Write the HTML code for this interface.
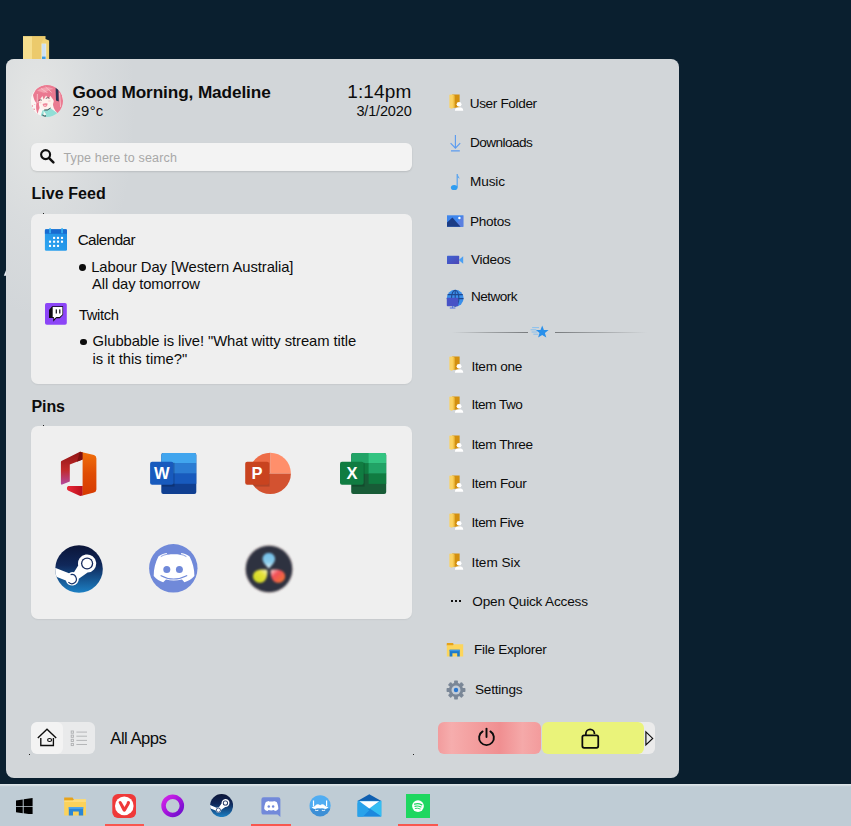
<!DOCTYPE html>
<html lang="en">
<head>
<meta charset="utf-8">
<title>Start Menu</title>
<style>
*{box-sizing:border-box;margin:0;padding:0}
html,body{width:851px;height:826px;overflow:hidden;background:#0a1f2f;font-family:"Liberation Sans",sans-serif;color:#0c0c0c}
.abs{position:absolute}
#desk{position:absolute;left:0;top:0;width:851px;height:826px;background:#0a1f2f;overflow:hidden}
#panel{position:absolute;left:6px;top:59px;width:673px;height:719px;background:#d2d6d9;border-radius:8px;overflow:hidden}
#glow{position:absolute;left:-40px;top:-40px;width:170px;height:300px;background:radial-gradient(ellipse at 42% 30%,rgba(233,234,232,.8) 0,rgba(226,228,228,.4) 40%,rgba(210,214,217,0) 70%)}
.t{position:absolute;white-space:nowrap;line-height:1}
#taskbar{position:absolute;left:0;top:784px;width:851px;height:42px;background:linear-gradient(#e2e8eb 0,#d6dfe4 1.2px,#bfccd5 2.8px)}
.card{position:absolute;background:#efefef;border-radius:7px;box-shadow:0 1px 1.5px rgba(0,0,0,.06)}
.ul{position:absolute;top:824px;height:2px;background:#f8574f}
.dot{position:absolute;width:6.8px;height:6.8px;border-radius:50%;background:#0c0c0c}
</style>
</head>
<body>
<div id="desk">

<!-- desktop folder icon -->
<svg class="abs" style="left:22px;top:35px" width="28" height="26" viewBox="0 0 28 26">
  <path d="M1 1.3 L23.5 1.3 L23.5 4 L27.1 5.4 L27.1 26 L1 26 Z" fill="#f0d274"/>
  <path d="M1 1.3 L10 1.3 L10 26 L1 26 Z" fill="#f6de8e"/>
  <path d="M10 1.3 L23.5 1.3 L19 8 L19 26 L10 26 Z" fill="#ecca6c"/>
  <rect x="19.6" y="8.6" width="4.6" height="17.4" fill="#e6eef6"/>
  <rect x="20" y="21.5" width="3.6" height="3.2" fill="#3d9be2"/>
  <path d="M20 10h3.6M20 12h3.6M20 14h3.6M20 16h3.6M20 18h3.6M20 20h3.6" stroke="#a9cdee" stroke-width=".8"/>
</svg>

<svg class="abs" style="left:3px;top:269px" width="4" height="8" viewBox="0 0 4 8"><path d="M3 1.2 L3 6.8 L.8 6.8 Z" fill="#e8eef6"/></svg>
<div id="panel"><div id="glow"></div></div>

<!-- SEARCH + CARDS -->
<div class="abs" id="search" style="left:31px;top:143px;width:381px;height:28px;background:#f3f3f3;border-radius:6px;box-shadow:0 1px 2px rgba(0,0,0,.12)"></div>
<div class="card" style="left:31px;top:214px;width:381px;height:170px"></div>
<div class="card" style="left:31px;top:426px;width:381px;height:193px"></div>
<div class="abs" style="left:31px;top:722px;width:64px;height:32px;border-radius:6px;background:#e9eaeb;overflow:hidden"><div style="width:32px;height:32px;background:#f3f3f3;border-radius:6px"></div></div>
<!-- power row -->
<div class="abs" style="left:438px;top:722px;width:103px;height:32px;border-radius:6px;background:linear-gradient(90deg,#f29c9d 0,#f6adad 13%,#f4a2a2 30%,#f08f91 60%,#f5a9a9 82%,#f39b9c 100%)"></div>
<div class="abs" style="left:636px;top:722px;width:19px;height:32px;border-radius:0 6px 6px 0;background:#ebebeb"></div>
<div class="abs" style="left:542px;top:722px;width:102px;height:32px;border-radius:6px;background:#eaf37a"></div>


<div class="t" id="greet" style="left:72.4px;top:84.00px;font-size:17.2px;letter-spacing:-0.104px;font-weight:bold">Good Morning, Madeline</div>
<div class="t" id="temp" style="left:72.6px;top:104.00px;font-size:14.8px;letter-spacing:0.292px;">29°c</div>
<div class="t" id="clock" style="left:347.2px;top:82.00px;font-size:19px;letter-spacing:0.134px;">1:14pm</div>
<div class="t" id="date" style="left:356.4px;top:104.00px;font-size:14.5px;letter-spacing:-0.162px;">3/1/2020</div>
<div class="t" id="ph" style="left:63.4px;top:152.00px;font-size:12.5px;letter-spacing:0.166px;color:#a8a8a8">Type here to search</div>
<div class="t" id="lf" style="left:31.4px;top:186.00px;font-size:16px;letter-spacing:0.069px;font-weight:bold">Live Feed</div>
<div class="t" id="cal" style="left:77.7px;top:232.00px;font-size:15.2px;letter-spacing:-0.538px;">Calendar</div>
<div class="t" id="lab" style="left:91.2px;top:260.00px;font-size:14.8px;letter-spacing:-0.077px;">Labour Day [Western Australia]</div>
<div class="t" id="allday" style="left:92.1px;top:277.00px;font-size:14.8px;letter-spacing:-0.159px;">All day tomorrow</div>
<div class="t" id="tw" style="left:78.9px;top:308.00px;font-size:14.8px;letter-spacing:-0.366px;">Twitch</div>
<div class="t" id="glub" style="left:92.6px;top:334.00px;font-size:14.8px;letter-spacing:-0.073px;">Glubbable is live! "What witty stream title</div>
<div class="t" id="isit" style="left:92.4px;top:352.00px;font-size:14.8px;letter-spacing:0.002px;">is it this time?"</div>
<div class="t" id="pins" style="left:31.4px;top:399.00px;font-size:16px;letter-spacing:-0.061px;font-weight:bold">Pins</div>
<div class="t" id="allapps" style="left:110.3px;top:731.00px;font-size:16.6px;letter-spacing:-0.479px;">All Apps</div>
<div class="t" id="r1" style="left:469.7px;top:97.00px;font-size:13.6px;letter-spacing:-0.356px;">User Folder</div>
<div class="t" id="r2" style="left:470.0px;top:136.00px;font-size:13.6px;letter-spacing:-0.546px;">Downloads</div>
<div class="t" id="r3" style="left:470.0px;top:175.00px;font-size:13.6px;letter-spacing:-0.113px;">Music</div>
<div class="t" id="r4" style="left:470.0px;top:215.00px;font-size:13.6px;letter-spacing:-0.314px;">Photos</div>
<div class="t" id="r5" style="left:471.1px;top:253.00px;font-size:13.6px;letter-spacing:-0.305px;">Videos</div>
<div class="t" id="r6" style="left:470.9px;top:290.00px;font-size:13.6px;letter-spacing:-0.514px;">Network</div>
<div class="t" id="i1" style="left:471.4px;top:360.00px;font-size:13.6px;letter-spacing:-0.291px;">Item one</div>
<div class="t" id="i2" style="left:471.4px;top:398.00px;font-size:13.6px;letter-spacing:-0.484px;">Item Two</div>
<div class="t" id="i3" style="left:471.4px;top:438.00px;font-size:13.6px;letter-spacing:-0.424px;">Item Three</div>
<div class="t" id="i4" style="left:471.4px;top:477.00px;font-size:13.6px;letter-spacing:-0.340px;">Item Four</div>
<div class="t" id="i5" style="left:471.4px;top:516.00px;font-size:13.6px;letter-spacing:-0.407px;">Item Five</div>
<div class="t" id="i6" style="left:471.4px;top:556.00px;font-size:13.6px;letter-spacing:-0.041px;">Item Six</div>
<div class="t" id="qa" style="left:472.3px;top:595.00px;font-size:13.6px;letter-spacing:-0.185px;">Open Quick Access</div>
<div class="t" id="fe" style="left:474.0px;top:643.00px;font-size:13.6px;letter-spacing:-0.286px;">File Explorer</div>
<div class="t" id="st" style="left:475.0px;top:683.00px;font-size:13.6px;letter-spacing:-0.222px;">Settings</div>

<!-- avatar -->
<div class="abs" style="left:31.2px;top:85.2px;width:32px;height:32px;border-radius:50%;overflow:hidden;background:#f7eeee">
<svg width="32" height="32" viewBox="0 0 32 32">
  <defs><filter id="avb" x="-10%" y="-10%" width="120%" height="120%"><feGaussianBlur stdDeviation=".45"/></filter></defs>
  <g filter="url(#avb)">
  <rect x="-2" y="-2" width="36" height="36" fill="#fbf5f4"/>
  <path d="M17 -1 L26 1 L24 5 L18 4Z" fill="#ead8cc"/>
  <!-- hair mass -->
  <path d="M4.5 5 C9 -1 20 -2 26 2.5 C32 7 33.5 17 31 26 L27.5 29 C25 27 22.5 24 22 20 L22.5 11 L9 10.5 C7.5 14 7.5 19 8.6 23 C7.4 25 7 27 6.8 29 C5.2 26 4.6 22 5.4 18 C3.4 16 2.4 12.6 2 10 Z" fill="#ea7a91"/>
  <path d="M6 6 C10 2 18 1.2 22.5 4 C19 4.4 15.6 6 13.6 8.6 C11.2 7 8.4 6.2 6 6Z" fill="#f3a0ae"/>
  <path d="M10 3.4 L17 8.4 M14.6 2 L20.6 7.4 M28.6 8 L29.6 22 M6.4 9 L6.2 18" stroke="#f7c0c8" stroke-width=".9" fill="none"/>
  <!-- face -->
  <path d="M8.4 12 C11 10 18 9.2 22.4 11.4 C23.4 15.6 22.2 20.6 19 23.4 C16 25.4 12 24.8 10 22 C8.2 19.4 7.8 15 8.4 12Z" fill="#fdf1ec"/>
  <!-- bangs -->
  <path d="M7.6 9 C12 7.4 18 7 23 9.4 L23.4 16.4 C21.8 14.2 20.4 12.4 19.4 10.8 L17.6 13.4 L15 10.6 L12.6 14.4 L11.4 11 C10.2 12.6 9 14.2 8.2 16.2 Z" fill="#ea7890"/>
  <!-- ribbon -->
  <path d="M24.6 2.6 L27.4 4.4 L27.8 16.4 L25 15.4 Z" fill="#2b3052"/>
  <!-- eyes -->
  <path d="M7.6 15.6 q1.6 -1.3 3.2 -.4 M14.8 13.4 q1.8 -1.3 3.8 -.2" stroke="#4b3a44" stroke-width=".8" fill="none"/>
  <ellipse cx="9.2" cy="17.6" rx="1.5" ry=".8" fill="#f8c9cc" opacity=".8"/><ellipse cx="18.4" cy="16" rx="1.6" ry=".8" fill="#f8c9cc" opacity=".8"/>
  <!-- mouth -->
  <path d="M11.6 19 Q14.2 17.6 16.6 18.6 Q16.4 22.2 13.8 22 Q11.6 21.6 11.6 19Z" fill="#ee8499"/>
  <ellipse cx="14" cy="20.6" rx="1.4" ry=".8" fill="#f9bcc4"/>
  <!-- clothes -->
  <path d="M11.4 25.6 L19.6 23.2 L27.6 29 L25 33 L9 33 Z" fill="#92ded6"/>
  <path d="M13.2 25 Q16.4 26 19.6 23" stroke="#2a2630" stroke-width=".8" fill="none"/>
  <path d="M11.4 30 Q13 31.6 15 31" stroke="#2a2630" stroke-width="1" fill="none"/>
  <path d="M12.6 26 L15.4 29.4 L12.6 30.4Z" fill="#fdf6f2"/>
  <!-- left bg flecks -->
  <circle cx="1.3" cy="21" r=".7" fill="#ea7890"/><circle cx="3.1" cy="24.2" r=".8" fill="#ea7890"/><circle cx="3.8" cy="19.4" r=".5" fill="#f3a6b2"/>
  </g>
</svg>
</div>

<!-- search icon -->
<svg class="abs" style="left:38.6px;top:148.4px" width="17" height="17" viewBox="0 0 17 17"><circle cx="6.6" cy="6.6" r="4.5" fill="none" stroke="#111" stroke-width="2.1"/><path d="M10.1 10.1 L14.4 14.4" stroke="#111" stroke-width="2.5" stroke-linecap="round"/></svg>

<!-- calendar icon -->
<svg class="abs" style="left:44px;top:228px" width="24" height="24" viewBox="0 0 24 24">
  <defs><linearGradient id="cg" x1="0" y1="1" x2="1" y2="0"><stop offset="0" stop-color="#2fa6f0"/><stop offset="1" stop-color="#1c8be4"/></linearGradient></defs>
  <rect x=".9" y="1.3" width="22.1" height="21.5" rx="1.3" fill="url(#cg)"/>
  <path d="M.9 2.6 a1.3 1.3 0 0 1 1.3 -1.3 h19.5 a1.3 1.3 0 0 1 1.3 1.3 v3.2 h-22.1z" fill="#186bd0"/>
  <rect x="5.3" y="0" width="1.5" height="5.2" rx=".5" fill="#3bbcf6"/><rect x="17.3" y="0" width="1.5" height="5.2" rx=".5" fill="#3bbcf6"/>
  <g fill="#fff">
   <rect x="9.05" y="8.85" width="2.1" height="2.1"/><rect x="12.95" y="8.85" width="2.1" height="2.1"/><rect x="16.95" y="8.85" width="2.1" height="2.1"/>
   <rect x="4.95" y="12.65" width="2.1" height="2.1"/><rect x="9.05" y="12.65" width="2.1" height="2.1"/><rect x="12.95" y="12.65" width="2.1" height="2.1"/><rect x="16.95" y="12.65" width="2.1" height="2.1"/>
   <rect x="4.95" y="16.85" width="2.1" height="2.1"/><rect x="9.05" y="16.85" width="2.1" height="2.1"/><rect x="12.95" y="16.85" width="2.1" height="2.1"/>
  </g>
</svg>
<!-- twitch icon -->
<svg class="abs" style="left:45.2px;top:302.8px" width="21.8" height="21.8" viewBox="0 0 21.8 21.8">
  <rect width="21.8" height="21.8" rx="1.8" fill="#8c45f7"/>
  <path d="M7.1 3.2 H18.1 V11.7 L14.8 15.2 H11.3 L8.3 18.7 V14.9 H4 V7 Z" fill="#0d0a12"/>
  <path d="M7.7 4 H17.4 V11.4 L14.6 14 H11.4 L8.9 15.9 V14 H7.7 Z" fill="#fff"/>
  <rect x="10.7" y="6.4" width="1.2" height="4.1" fill="#0d0a12"/><rect x="14.2" y="6.4" width="1.2" height="4.1" fill="#0d0a12"/>
</svg>
<div class="dot" style="left:79.3px;top:264.2px"></div>
<div class="dot" style="left:80.4px;top:338.5px"></div>

<!-- PINS: office -->
<svg class="abs" style="left:60px;top:451px" width="38" height="46" viewBox="0 0 38 46">
  <defs>
   <linearGradient id="of1" x1="0" y1="0" x2="0" y2="1"><stop offset="0" stop-color="#8f1414"/><stop offset=".55" stop-color="#c12a2a"/><stop offset="1" stop-color="#b44aa0"/></linearGradient>
   <linearGradient id="of2" x1="0" y1="0" x2="0" y2="1"><stop offset="0" stop-color="#f0700c"/><stop offset=".5" stop-color="#e04c04"/><stop offset="1" stop-color="#d63a02"/></linearGradient>
   <linearGradient id="of3" x1="0" y1="0" x2="1" y2="0"><stop offset="0" stop-color="#ec2838"/><stop offset="1" stop-color="#b80f1c"/></linearGradient>
  </defs>
  <path d="M20 .8 L1.4 10 Q.9 10.4 .9 11.2 V32.6 Q.9 34 2.2 33.6 L9.8 30.4 V13.6 L22.6 8.6 V1.2Z" fill="url(#of1)"/>
  <path d="M8.4 34.9 H22.8 V44.6 L20.2 45 L8 39.4 Q6.4 38.4 7 36.4 Q7.4 35 8.4 34.9Z" fill="url(#of3)"/>
  <path d="M20 .8 L34 4 Q36.4 4.8 36.4 7.4 V38.4 Q36.4 40.8 34 41.6 L22.6 44.6 V8.6 L20 .8Z" fill="url(#of2)"/>
  <path d="M20 .8 L22.6 1.6 V8.6 L17 10.8Z" fill="#7d1010"/>
</svg>
<!-- word -->
<svg class="abs" style="left:149px;top:452px" width="48" height="43" viewBox="0 0 48 43">
  <defs><clipPath id="wc"><rect x="12.3" y="1.1" width="35" height="40.8" rx="2"/></clipPath></defs>
  <g clip-path="url(#wc)"><rect x="12" y="1" width="36" height="41" fill="#103f91"/><rect x="12" y="1" width="36" height="10.6" fill="#41a5ee"/><rect x="12" y="11.3" width="36" height="10.5" fill="#2b7cd3"/><rect x="12" y="21.5" width="36" height="10.3" fill="#185abd"/></g>
  <rect x="13" y="10.6" width="12.6" height="24" fill="#000" opacity=".18"/>
  <rect x="1.1" y="9.8" width="23.3" height="23" rx="2" fill="#185abd"/>
  <text x="12.8" y="27.4" text-anchor="middle" font-family="Liberation Sans, sans-serif" font-weight="bold" font-size="16.5" fill="#fff">W</text>
</svg>
<!-- powerpoint -->
<svg class="abs" style="left:244px;top:452px" width="48" height="43" viewBox="0 0 48 43">
  <defs><clipPath id="pc"><circle cx="26.2" cy="21.4" r="20.7"/></clipPath></defs>
  <g clip-path="url(#pc)"><rect x="0" y="0" width="26.6" height="21.6" fill="#ed6c47"/><rect x="26.6" y="0" width="22" height="21.6" fill="#ff8f6b"/><rect x="0" y="21.6" width="48" height="22" fill="#d35230"/><rect x="6" y="10.6" width="19.6" height="24" fill="#000" opacity=".16"/></g>
  <rect x="1.2" y="9.8" width="23.8" height="23" rx="2" fill="#c9431f"/>
  <text x="13.1" y="27.3" text-anchor="middle" font-family="Liberation Sans, sans-serif" font-weight="bold" font-size="16.5" fill="#fff">P</text>
</svg>
<!-- excel -->
<svg class="abs" style="left:339px;top:452px" width="48" height="43" viewBox="0 0 48 43">
  <defs><clipPath id="xc"><rect x="12.2" y="1.1" width="35" height="40.8" rx="2"/></clipPath></defs>
  <g clip-path="url(#xc)">
   <rect x="12" y="1" width="36" height="41" fill="#185c37"/>
   <rect x="12" y="1" width="18" height="10.6" fill="#21a366"/><rect x="29.6" y="1" width="18.4" height="10.6" fill="#33c481"/>
   <rect x="12" y="11.3" width="18" height="10.5" fill="#107c41"/><rect x="29.6" y="11.3" width="18.4" height="10.5" fill="#21a366"/>
   <rect x="29.6" y="21.5" width="18.4" height="10.4" fill="#107c41"/>
  </g>
  <rect x="13" y="10.6" width="12.6" height="24" fill="#000" opacity=".18"/>
  <rect x="1" y="9.8" width="23.7" height="23" rx="2" fill="#107c41"/>
  <text x="12.9" y="27.3" text-anchor="middle" font-family="Liberation Sans, sans-serif" font-weight="bold" font-size="16.5" fill="#fff">X</text>
</svg>
<!-- steam -->
<svg class="abs" style="left:55px;top:544.5px" width="48" height="48" viewBox="0 0 48 48">
  <defs><linearGradient id="stg" x1="0" y1="0" x2="0" y2="1"><stop offset="0" stop-color="#0b1538"/><stop offset=".42" stop-color="#10285a"/><stop offset="1" stop-color="#1c80c4"/></linearGradient>
  <clipPath id="stc"><circle cx="24" cy="24" r="23.8"/></clipPath></defs>
  <circle cx="24" cy="24" r="23.8" fill="url(#stg)"/>
  <g clip-path="url(#stc)">
   <path d="M-1 22.4 L14 28.2 Q16.6 26.8 19 27.2 L23.2 20.4 A9.1 9.1 0 1 1 32.6 27.6 L23.8 33.8 A6.6 6.6 0 0 1 10.8 35.6 L-1 30.8 Z" fill="#fff"/>
   <circle cx="32.1" cy="18.5" r="6.1" fill="#13275a"/><circle cx="32.1" cy="18.5" r="4.8" fill="#fff"/>
   <path d="M15.6 29.6 A4.6 4.6 0 1 1 13.4 37.2" fill="none" stroke="#16346c" stroke-width="1.2"/>
  </g>
</svg>
<!-- discord -->
<svg class="abs" style="left:149.2px;top:543.8px" width="49" height="49" viewBox="0 0 49 49">
  <circle cx="24.3" cy="24.3" r="24.2" fill="#7089d9"/>
  <path d="M17.6 9 C14.6 9.5 11.8 10.6 9.4 12.4 C6.4 18 4.6 25 4.7 32 C7.4 35.4 10.8 37.4 14.2 38.2 L17 35.4 C21.8 36.8 27.4 36.8 33 35.4 L35.4 38.2 C38.8 37.4 42.6 35.4 45.4 32 C45.5 25 43.6 18 40.6 12.4 C38.2 10.6 35.4 9.5 32.4 9 L31.4 10.8 C27 10.2 23 10.2 18.6 10.8 Z" fill="#fff"/>
  <circle cx="17.8" cy="25.4" r="3.5" fill="#7089d9"/><circle cx="30.4" cy="25.4" r="3.5" fill="#7089d9"/>
  <path d="M11.6 31.4 Q24.3 38.6 38.2 31.4" fill="none" stroke="#7089d9" stroke-width="1.1"/>
  <path d="M11.8 12.6 Q14.6 10.8 18.6 10.2 M30.6 10.2 Q34.6 10.8 37.4 12.6" fill="none" stroke="#7089d9" stroke-width=".8"/>
</svg>
<!-- davinci resolve -->
<svg class="abs" style="left:242px;top:541.5px" width="54" height="54" viewBox="0 0 54 54">
  <defs>
   <filter id="bl" x="-20%" y="-20%" width="140%" height="140%"><feGaussianBlur stdDeviation=".85"/></filter>
   <filter id="bl2" x="-20%" y="-20%" width="140%" height="140%"><feGaussianBlur stdDeviation="1.1"/></filter>
   <linearGradient id="dv1" x1="0" y1="0" x2="0" y2="1"><stop offset="0" stop-color="#74bfe9"/><stop offset=".6" stop-color="#88cbea"/><stop offset="1" stop-color="#eaf6fb"/></linearGradient>
   <linearGradient id="dv2" x1="1" y1="0" x2="0" y2="1"><stop offset="0" stop-color="#f6f4c8"/><stop offset=".35" stop-color="#e6e238"/><stop offset="1" stop-color="#c9d61e"/></linearGradient>
   <linearGradient id="dv3" x1="0" y1="0" x2="1" y2="1"><stop offset="0" stop-color="#fbe0dc"/><stop offset=".35" stop-color="#f2505a"/><stop offset="1" stop-color="#f07a2c"/></linearGradient>
  </defs>
  <circle cx="27" cy="27" r="24.4" fill="#d9c9c6" opacity=".55" filter="url(#bl2)"/>
  <circle cx="27" cy="27" r="23.3" fill="#2f3340" filter="url(#bl)"/>
  <g filter="url(#bl)">
   <path d="M26.8 26.4 C22 22 20.4 19 20.6 16.6 C20.8 13 23.6 11 26.8 11 C30 11 32.8 13 33 16.6 C33.2 19 31.6 22 26.8 26.4Z" fill="url(#dv1)"/>
   <path d="M25.4 28 C25.8 33 24.6 37 22 39.4 C19 41.6 15 41 12.6 38.4 C10.2 35.6 10.4 31.6 13.4 29.4 C16.4 27.4 21 27.2 25.4 28Z" fill="url(#dv2)"/>
   <path d="M28.7 28 C28.3 33 29.5 37 32.1 39.4 C35.1 41.6 39.1 41 41.5 38.4 C43.9 35.6 43.7 31.6 40.7 29.4 C37.7 27.4 33.1 27.2 28.7 28Z" fill="url(#dv3)"/>
  </g>
</svg>

<!-- home icon -->
<svg class="abs" style="left:36px;top:727px" width="22" height="20" viewBox="0 0 22 20">
  <path d="M1.8 11 L11 2.2 L20.2 11 M4.8 11 V18.5 H17.4 V11" fill="none" stroke="#0c0c0c" stroke-width="1.35" stroke-linejoin="miter"/>
  <ellipse cx="13.6" cy="13" rx="2" ry="1.5" fill="none" stroke="#0c0c0c" stroke-width="1.1"/>
</svg>
<!-- list icon -->
<svg class="abs" style="left:69px;top:729px" width="20" height="18" viewBox="0 0 20 18">
  <g fill="none" stroke="#aeb0b2" stroke-width=".9">
   <rect x="2.2" y="2" width="2.2" height="2.2"/><rect x="2.2" y="6.1" width="2.2" height="2.2"/><rect x="2.2" y="10.3" width="2.2" height="2.2"/><rect x="2.2" y="14.4" width="2.2" height="2.2"/>
   <path d="M7.4 3.1 H18 M7.4 7.2 H18 M7.4 11.4 H18 M7.4 15.5 H18"/>
  </g>
</svg>
<!-- stray pixels -->
<div class="abs" style="left:43px;top:213px;width:1px;height:1px;background:#222"></div>
<div class="abs" style="left:43px;top:425px;width:1px;height:1px;background:#222"></div>
<div class="abs" style="left:29px;top:754px;width:1px;height:1px;background:#222"></div>
<div class="abs" style="left:413px;top:754px;width:1px;height:1px;background:#222"></div>


<!-- user-folder icon symbol -->
<svg width="0" height="0" style="position:absolute">
 <defs>
  <symbol id="uf" viewBox="0 0 16 18">
   <path d="M3.2 .5 H11.2 V14.6 H3.2 Z" fill="#d3900f"/>
   <path d="M.4 .9 L4 .6 L5.6 1.6 V14.2 L2.6 15.6 L.4 14.6 Z" fill="#fbd365"/>
   <path d="M4 .6 L5.6 1.6 V14.2 L4 15 Z" fill="#f3c44a"/>
   <circle cx="10.6" cy="10.9" r="2.6" fill="#fff"/>
   <path d="M6.2 17.6 Q6.2 14 10.6 14 Q15 14 15 17.6 Z" fill="#fff"/>
  </symbol>
 </defs>
</svg>
<svg class="abs" style="left:449px;top:94.4px" width="15.2" height="17.1"><use href="#uf"/></svg>
<svg class="abs" style="left:449px;top:356.4px" width="15.2" height="17.1"><use href="#uf"/></svg>
<svg class="abs" style="left:449px;top:396.2px" width="15.2" height="17.1"><use href="#uf"/></svg>
<svg class="abs" style="left:449px;top:435.4px" width="15.2" height="17.1"><use href="#uf"/></svg>
<svg class="abs" style="left:449px;top:475.4px" width="15.2" height="17.1"><use href="#uf"/></svg>
<svg class="abs" style="left:449px;top:513.4px" width="15.2" height="17.1"><use href="#uf"/></svg>
<svg class="abs" style="left:449px;top:553.2px" width="15.2" height="17.1"><use href="#uf"/></svg>

<!-- downloads -->
<svg class="abs" style="left:448px;top:133px" width="16" height="20" viewBox="0 0 16 20">
  <path d="M7.4 2 V15 M2.6 10.2 L7.4 15.2 L12.2 10.2 M3 17.8 H11.8" fill="none" stroke="#5c9cf0" stroke-width="1.15"/>
</svg>
<!-- music -->
<svg class="abs" style="left:448px;top:172px" width="16" height="20" viewBox="0 0 16 20">
  <path d="M9.2 2 V15.4" stroke="#5aa4ee" stroke-width="1.2" fill="none"/>
  <path d="M9.2 2 L11.8 6.8 L9.2 5.2Z" fill="#5aa4ee"/>
  <ellipse cx="6.2" cy="15.5" rx="3.3" ry="2.6" fill="#2f9df1"/>
</svg>
<!-- photos -->
<svg class="abs" style="left:447px;top:215px" width="17" height="12" viewBox="0 0 17 12">
  <rect x="0" y=".3" width="16.3" height="11.5" fill="#3f86ec"/>
  <path d="M16.3 .3 V11.8 H7 L12 5.4 Z" fill="#5a7fe0"/>
  <path d="M0 11.8 V7.4 L5.4 2.6 L13.6 11.8 Z" fill="#1b3c85"/>
  <circle cx="12.4" cy="3" r="1.2" fill="#fff"/>
</svg>
<!-- videos -->
<svg class="abs" style="left:447px;top:255px" width="17" height="10" viewBox="0 0 17 10">
  <defs><linearGradient id="vg" x1="0" y1="0" x2="1" y2="1"><stop offset="0" stop-color="#3f63d2"/><stop offset="1" stop-color="#4c46b6"/></linearGradient></defs>
  <rect x="0" y=".8" width="12.2" height="8.2" rx=".6" fill="url(#vg)"/>
  <path d="M12.2 4.4 L16.2 1.2 V8.8 L12.2 5.6Z" fill="#4a9ff2"/>
</svg>
<!-- network -->
<svg class="abs" style="left:446px;top:288.6px" width="19" height="20" viewBox="0 0 19 20">
  <circle cx="9.2" cy="9.2" r="8.4" fill="#3b8fea"/>
  <g fill="none" stroke="#1c3c82" stroke-width="1.1" opacity=".85"><ellipse cx="9.2" cy="9.2" rx="3.7" ry="8"/><path d="M1.6 5.6 H16.8 M.9 9.6 H17.5"/><path d="M9.2 1 V9"/></g>
  <rect x=".8" y="8.8" width="11.4" height="8.4" rx=".8" fill="#4853c6"/>
  <path d="M6.5 17.2 V18.8 M3.8 19 H9.4" stroke="#4a6fe0" stroke-width="1"/>
</svg>
<!-- divider with star -->
<div class="abs" style="left:452px;top:332px;width:76px;height:1px;background:linear-gradient(90deg,rgba(125,128,130,0) 0,rgba(125,128,130,.55) 45%,rgba(110,113,116,.9) 100%)"></div>
<div class="abs" style="left:555px;top:332px;width:92px;height:1px;background:linear-gradient(90deg,rgba(110,113,116,.9) 0,rgba(125,128,130,.55) 50%,rgba(125,128,130,0) 100%)"></div>
<svg class="abs" style="left:529px;top:324px" width="22" height="16" viewBox="0 0 22 16">
  <path d="M13.2 1.4 L14.9 6 L19.6 6.1 L15.9 9 L17.3 13.6 L13.2 10.9 L9.1 13.6 L10.5 9 L6.8 6.1 L11.5 6 Z" fill="#2a90ea"/>
  <path d="M3.2 3.6 H10 M1.6 5.8 H7.4 M2.6 8 H8.2 M4.4 10.2 H9.4" stroke="#7fbdf2" stroke-width=".9"/>
</svg>
<!-- quick access dots -->
<div class="abs" style="left:450.8px;top:600.1px;width:2.3px;height:2.1px;background:#111"></div>
<div class="abs" style="left:454.8px;top:600.1px;width:2.3px;height:2.1px;background:#111"></div>
<div class="abs" style="left:458.8px;top:600.1px;width:2.3px;height:2.1px;background:#111"></div>
<!-- file explorer -->
<svg class="abs" style="left:446px;top:642px" width="18" height="16" viewBox="0 0 18 16">
  <path d="M.8 1 H7 L7.8 2.4 H.8Z" fill="#e6a21a"/>
  <rect x=".8" y="1.9" width="6.6" height="2" fill="#e6a21a"/>
  <path d="M.8 3.2 H7.2 L8.4 2.2 H17.2 V14.6 H.8 Z" fill="#fcd55c"/>
  <path d="M3.6 7.8 H13.8 V14.6 H11.2 V11.2 H6.4 V14.6 H3.6Z" fill="#1b7acb"/>
  <rect x="3.6" y="7.8" width="10.2" height="1.4" fill="#3d97e2"/>
</svg>
<!-- settings gear -->
<svg class="abs" style="left:445.5px;top:679.6px" width="20" height="20" viewBox="-10.5 -10.5 21 21">
  <g fill="#7a8797">
   <circle r="7.6"/>
   <g id="tooth"><rect x="-2" y="-9.9" width="4" height="4" rx=".7"/></g>
   <use href="#tooth" transform="rotate(45)"/><use href="#tooth" transform="rotate(90)"/><use href="#tooth" transform="rotate(135)"/>
   <use href="#tooth" transform="rotate(180)"/><use href="#tooth" transform="rotate(225)"/><use href="#tooth" transform="rotate(270)"/><use href="#tooth" transform="rotate(315)"/>
  </g>
  <circle r="4.7" fill="#c3ccd6"/><circle r="2.3" fill="#2b77cf"/>
</svg>
<!-- power icon -->
<svg class="abs" style="left:476.2px;top:726.4px" width="21" height="21" viewBox="0 0 21 21">
  <path d="M6.6 5.4 A7.4 7.4 0 1 0 14.4 5.4" fill="none" stroke="#0c0c0c" stroke-width="1.9" stroke-linecap="round"/>
  <path d="M10.5 2.6 V11" stroke="#0c0c0c" stroke-width="1.9" stroke-linecap="round"/>
</svg>
<!-- lock icon -->
<svg class="abs" style="left:579px;top:726px" width="23" height="24" viewBox="0 0 23 24">
  <rect x="3.35" y="9.35" width="15.9" height="12.4" rx="1.7" fill="none" stroke="#0c0c0c" stroke-width="1.75"/>
  <path d="M6.85 9.4 V7.75 A4.3 4.3 0 0 1 15.45 7.75 V8.1" fill="none" stroke="#0c0c0c" stroke-width="1.75"/>
</svg>
<!-- arrow -->
<svg class="abs" style="left:644px;top:730px" width="11" height="17" viewBox="0 0 11 17">
  <path d="M1.9 1.8 L8.7 8.4 L1.9 15 Z" fill="none" stroke="#0c0c0c" stroke-width="1.15" stroke-linejoin="miter"/>
</svg>


<div id="taskbar"></div>
<!-- windows logo -->
<svg class="abs" style="left:16px;top:797.6px" width="16.6" height="16.6" viewBox="0 0 16 16">
  <path d="M0 2.3 L6.5 1.4 V7.6 H0Z M7.4 1.25 L16 0 V7.6 H7.4Z M0 8.4 H6.5 V14.6 L0 13.7Z M7.4 8.4 H16 V16 L7.4 14.75Z" fill="#000"/>
</svg>
<!-- file explorer -->
<svg class="abs" style="left:63.6px;top:796.6px" width="22.6" height="19" viewBox="0 0 22.6 19">
  <path d="M.2 .4 H8.6 L9.6 2.2 V4 H.2Z" fill="#e7a21b"/>
  <path d="M.2 3.4 H9 L10.6 2.2 H22.3 V18.4 H.2 Z" fill="#fbd25a"/>
  <path d="M.2 3.4 H9 L10.6 2.2 H22.3 V5 H.2 Z" fill="#fcdc7a"/>
  <path d="M4.8 10 H19.2 V18.4 H14.8 V14.4 H9 V18.4 H4.8Z" fill="#2a86d6"/>
  <rect x="4.8" y="10" width="14.4" height="1.8" fill="#4fa6ec"/>
</svg>
<!-- vivaldi -->
<svg class="abs" style="left:112px;top:794px" width="24.4" height="24" viewBox="0 0 24.4 24">
  <rect x=".3" y=".1" width="23.8" height="23.8" rx="5.6" fill="#ef3939"/>
  <circle cx="12.3" cy="11.9" r="9.3" fill="#fff"/>
  <g transform="translate(12.3,12.3) scale(.96) translate(-12.4,-12)"><path d="M6.6 8.4 C6 6.6 8.6 5.8 9.6 7.4 L12.6 12.8 L15 8.6 C14.6 6.6 17.4 5.8 18.2 7.6 C18.6 8.6 18.2 9.4 17.6 10.4 L14 16.6 C13.2 18 11.6 18 10.8 16.6 Z" fill="#ef3939"/></g>
</svg>
<!-- purple ring -->
<svg class="abs" style="left:160px;top:793px" width="26" height="26" viewBox="0 0 26 26">
  <defs><linearGradient id="pr" x1="0" y1="0" x2="1" y2="1"><stop offset="0" stop-color="#d425e8"/><stop offset=".5" stop-color="#a413dc"/><stop offset="1" stop-color="#6a10cc"/></linearGradient></defs>
  <circle cx="12.7" cy="12.8" r="9.15" fill="none" stroke="url(#pr)" stroke-width="4.5"/>
</svg>
<!-- steam small -->
<svg class="abs" style="left:210.3px;top:794.2px" width="23.2" height="23.2" viewBox="0 0 48 48">
  <circle cx="24" cy="24" r="23.8" fill="url(#stg)"/>
  <g clip-path="url(#stc)">
   <path d="M-1 22.5 L13.5 28.6 Q16 27.2 18.4 27.6 L24 19.6 A8.2 8.2 0 1 1 31.6 26.8 L23.4 32.8 A6 6 0 0 1 11.6 34.4 L-1 29 Z" fill="#fff"/>
   <circle cx="31.9" cy="18.6" r="5.4" fill="#142a5c"/><circle cx="31.9" cy="18.6" r="3.7" fill="#fff"/>
   <circle cx="17.4" cy="33.4" r="4.4" fill="none" stroke="#15326a" stroke-width="1.6"/>
  </g>
</svg>
<!-- discord small -->
<svg class="abs" style="left:261px;top:796.6px" width="20.4" height="20.4" viewBox="0 0 20.4 20.4">
  <path d="M2.6 .3 H17.2 A2.2 2.2 0 0 1 19.4 2.5 V19.9 L16.6 17.6 H2.6 A2.2 2.2 0 0 1 .4 15.4 V2.5 A2.2 2.2 0 0 1 2.6 .3Z" fill="#7289da"/>
  <g transform="translate(1.63,.83) scale(.346)">
   <path d="M17.6 9 C14.6 9.5 11.8 10.6 9.4 12.4 C6.4 18 4.6 25 4.7 32 C7.4 35.4 10.8 37.4 14.2 38.2 L17 35.4 C21.8 36.8 27.4 36.8 33 35.4 L35.4 38.2 C38.8 37.4 42.6 35.4 45.4 32 C45.5 25 43.6 18 40.6 12.4 C38.2 10.6 35.4 9.5 32.4 9 L31.4 10.8 C27 10.2 23 10.2 18.6 10.8 Z" fill="#fff"/>
   <circle cx="17.8" cy="25.4" r="3.6" fill="#7289da"/><circle cx="30.4" cy="25.4" r="3.6" fill="#7289da"/>
  </g>
</svg>
<!-- mustache -->
<svg class="abs" style="left:309px;top:794.6px" width="22" height="22" viewBox="0 0 22 22">
  <defs><clipPath id="mc"><circle cx="11.1" cy="10.8" r="10.6"/></clipPath></defs>
  <g clip-path="url(#mc)"><rect width="22" height="14" fill="#50adf2"/><rect y="13.6" width="22" height="9" fill="#3c8fd6"/></g>
  <path d="M2.8 11.8 C3.8 12.6 5.4 11.8 6.4 10.6 C7.6 9 9.6 8.8 11.1 10.2 C12.6 8.8 14.6 9 15.8 10.6 C16.8 11.8 18.4 12.6 19.4 11.8 C19 13.8 16.4 14.4 14.6 13.6 C13.4 13.2 12.2 13 11.1 13.6 C10 13 8.8 13.2 7.6 13.6 C5.8 14.4 3.2 13.8 2.8 11.8Z" fill="#fff"/>
  <path d="M4.5 5.6 V11.4 M17.6 5.6 V11.4" stroke="#fff" stroke-width="1.2"/>
  <path d="M6 15 Q7.6 16 9.4 15.2 M12.8 15.2 Q14.6 16 16.2 15" stroke="#fff" stroke-width="1" fill="none"/>
</svg>
<!-- mail -->
<svg class="abs" style="left:356.6px;top:794.4px" width="25" height="23" viewBox="0 0 25 23">
  <path d="M.5 7 L12.3 .2 L24.3 7 Z" fill="#0f5fb0"/>
  <rect x=".5" y="6.8" width="23.8" height="15.6" fill="#29a2ea"/>
  <path d="M24.3 6.8 L12.3 14.2 L24.3 22.4Z" fill="#34bef2"/>
  <path d="M.5 22.4 L12.3 14.2 L24.3 22.4Z" fill="#1c88dd"/>
  <path d="M.5 6.8 V9 L12.3 16.2 L6 22.4 H.5Z" fill="#29a2ea"/>
  <path d="M2.4 7.2 H22.2 L12.3 14.4 Z" fill="#fff"/>
</svg>
<!-- spotify -->
<svg class="abs" style="left:405.8px;top:794px" width="24.4" height="24" viewBox="0 0 24.4 24">
  <rect width="24.4" height="24" fill="#1ed760"/>
  <circle cx="12" cy="12.1" r="5.9" fill="#fff"/>
  <g transform="translate(0,.6)" fill="none" stroke="#1ed760" stroke-linecap="round"><path d="M8.6 9.6 Q12.2 8.4 15.8 10.2" stroke-width="1.3"/><path d="M8.9 11.8 Q12 10.9 15 12.4" stroke-width="1.1"/><path d="M9.3 13.8 Q11.8 13.1 14.2 14.3" stroke-width=".9"/></g>
</svg>
<div class="ul" style="left:104.5px;width:39.5px"></div>
<div class="ul" style="left:251px;width:40px"></div>
<div class="ul" style="left:398px;width:40px"></div>


</div>
</body>
</html>
